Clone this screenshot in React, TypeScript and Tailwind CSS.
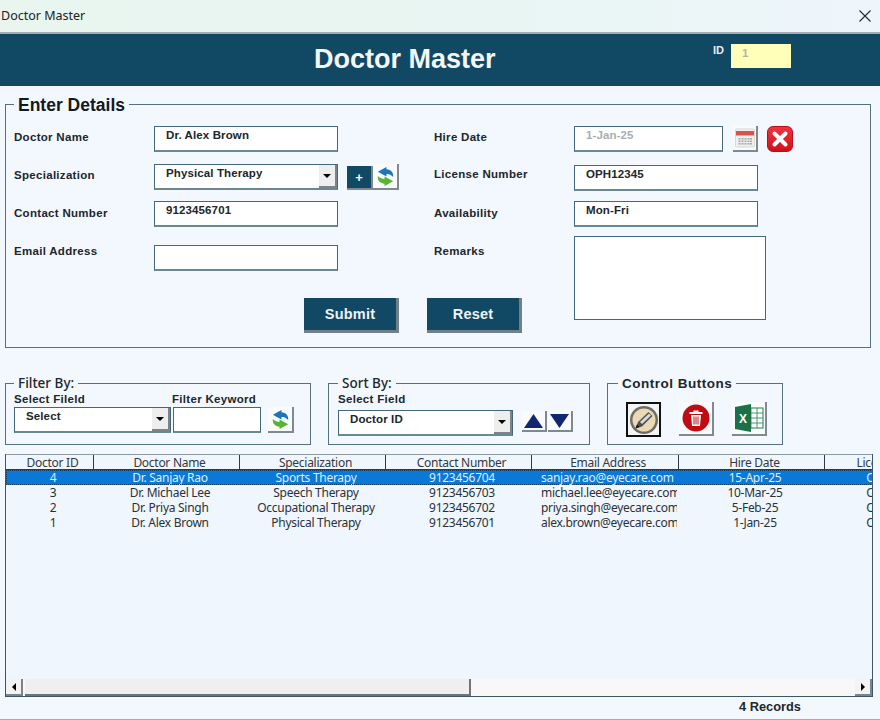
import type { ReactNode } from "react"

const COLUMNS = ["Doctor ID", "Doctor Name", "Specialization", "Contact Number", "Email Address", "Hire Date", "License Number"]

const DOCTORS = [
  ["4", "Dr. Sanjay Rao", "Sports Therapy", "9123456704", "sanjay.rao@eyecare.com", "15-Apr-25", "OPH45678"],
  ["3", "Dr. Michael Lee", "Speech Therapy", "9123456703", "michael.lee@eyecare.com", "10-Mar-25", "OPH34567"],
  ["2", "Dr. Priya Singh", "Occupational Therapy", "9123456702", "priya.singh@eyecare.com", "5-Feb-25", "OPH23456"],
  ["1", "Dr. Alex Brown", "Physical Therapy", "9123456701", "alex.brown@eyecare.com", "1-Jan-25", "OPH12345"],
]

const labelFont = "font-['Liberation_Sans',Arial,sans-serif] font-bold text-[11.5px] tracking-[0.3px] text-[#20262b]"
const valueFont = "font-['Liberation_Sans',Arial,sans-serif] font-bold text-[11.5px] tracking-[0.12px] text-[#20262b]"
const rowGrid = "grid grid-cols-[88px_146px_146px_146px_147px_146px_146px] w-[965px]"

function FieldLabel({ children, className = "" }: { children: ReactNode; className?: string }) {
  return <div className={`${labelFont} w-[140px] shrink-0 ${className}`}>{children}</div>
}

function TextBox({ value, className = "", muted = false }: { value?: string; className?: string; muted?: boolean }) {
  return (
    <div
      className={`${valueFont} h-[26px] border border-[#44687a] border-b-2 border-b-[#6c8794] bg-white pl-[11px] pt-[1px] leading-[14px] ${muted ? "!text-[#a9adb0]" : ""} ${className}`}
    >
      {value}
    </div>
  )
}

function DropArrow({ className = "" }: { className?: string }) {
  return (
    <div className={`flex w-[18px] shrink-0 items-center justify-center self-stretch border-r-2 border-b-2 border-[#7d8487] bg-[#eeeeee] ${className}`}>
      <div className="h-0 w-0 border-x-[4px] border-t-[4px] border-x-transparent border-t-black" />
    </div>
  )
}

function ComboBox({ value, className = "" }: { value: string; className?: string }) {
  return (
    <div className={`${valueFont} flex h-[26px] border border-[#44687a] border-b-2 border-b-[#6c8794] bg-white ${className}`}>
      <div className="flex-1 pl-[11px] pt-[1px] leading-[14px]">{value}</div>
      <DropArrow />
    </div>
  )
}

function IconButton({ children, className = "" }: { children: ReactNode; className?: string }) {
  return (
    <div className={`flex shrink-0 items-center justify-center border-r-2 border-b-2 border-[#7f8a8f] bg-[#f8fafc] ${className}`}>
      {children}
    </div>
  )
}

function ActionButton({ label }: { label: string }) {
  return (
    <div className="flex h-[35px] w-[95px] items-center justify-center border-r-[3px] border-b-[3px] border-[#717f88] bg-[#114863] pt-[1px] font-['Liberation_Sans',Arial,sans-serif] text-[14.5px] font-bold tracking-[0.2px] text-[#eef4f6]">
      {label}
    </div>
  )
}

function SwapIcon({ size = 23 }: { size?: number }) {
  return (
    <svg width={size} height={size} viewBox="0 0 24 24">
      <path d="M13 2 L4 7 L13 12 V9.5 C15.5 9.5 17.5 10 20 12.5 C20.5 7.5 17.5 5 13 4.5 Z" fill="#1c75b8" />
      <path d="M11 22 L20 17 L11 12 V14.5 C8.5 14.5 6.5 14 4 11.5 C3.5 16.5 6.5 19 11 19.5 Z" fill="#55b52f" />
    </svg>
  )
}

function CalendarIcon() {
  return (
    <svg width="20" height="20" viewBox="0 0 20 20">
      <rect x="0.5" y="1" width="19" height="18" rx="1" fill="#f1efee" stroke="#d9d6d4" />
      <rect x="1" y="3" width="18" height="4.5" fill="#d9534c" />
      {[10, 12.5, 15].map((y) =>
        [3.5, 6.5, 9.5, 12.5, 15].map((x) => <rect key={`${x}-${y}`} x={x} y={y} width="2" height="1.6" fill="#a4acb0" />),
      )}
    </svg>
  )
}

function RedCloseIcon() {
  return (
    <div className="ml-[9px] flex h-[26px] w-[26px] items-center justify-center rounded-[6px] border border-[#b3101c] bg-gradient-to-b from-[#f2323c] to-[#cf0f1c]">
      <svg width="18" height="18" viewBox="0 0 18 18">
        <path d="M3.5 3.5 L14.5 14.5 M14.5 3.5 L3.5 14.5" stroke="white" strokeWidth="4" strokeLinecap="round" />
      </svg>
    </div>
  )
}

function PencilIcon() {
  return (
    <svg width="30" height="30" viewBox="0 0 30 30">
      <circle cx="15" cy="15" r="14" fill="#6b6e66" />
      <circle cx="15" cy="15" r="11.5" fill="#ecd9b4" />
      <path d="M6.5 23.5 L9 17 L19.5 7 L23.5 11 L13 21.5 Z" fill="#4b5052" />
      <path d="M11 17 L20 8.5 L22 10.5 L13 19 Z" fill="#d5dadc" />
      <path d="M6.5 23.5 L8 19.5 L10.5 22 Z" fill="#111111" />
    </svg>
  )
}

function TrashIcon() {
  return (
    <svg width="28" height="28" viewBox="0 0 28 28">
      <circle cx="14" cy="14" r="13.5" fill="#c10b12" />
      <path d="M7.5 8 H20.5 V10 H7.5 Z M11.5 8 V6.5 H16.5 V8 Z" fill="white" />
      <path d="M9 11 H19 L18 22 H10 Z" fill="white" />
      <path d="M12 12.5 V20.5 M14 12.5 V20.5 M16 12.5 V20.5" stroke="#c10b12" strokeWidth="1" />
    </svg>
  )
}

function ExcelIcon() {
  return (
    <svg width="30" height="30" viewBox="0 0 30 30">
      <rect x="13" y="5" width="16" height="20" fill="white" stroke="#1f7a4a" />
      <path d="M17 5 V25 M23 5 V25 M13 10 H29 M13 15 H29 M13 20 H29" stroke="#3f9a6b" strokeWidth="1" />
      <path d="M1 4 L17 1 V29 L1 26 Z" fill="#1c7246" />
      <text x="9" y="20" textAnchor="middle" fontSize="12" fontWeight="700" fill="white" fontFamily="Liberation Sans">X</text>
    </svg>
  )
}

function Triangle({ up }: { up?: boolean }) {
  return (
    <IconButton className="h-[21px] w-[25px]">
      <svg width="19" height="14" viewBox="0 0 19 14">
        <path d={up ? "M9.5 0 L19 14 H0 Z" : "M0 0 H19 L9.5 14 Z"} fill="#12286e" />
      </svg>
    </IconButton>
  )
}

function GroupBox({ title, className, titleClass, children }: { title: string; className: string; titleClass: string; children: ReactNode }) {
  return (
    <fieldset className={`h-[70px] shrink-0 border border-[#54717f] ${className}`}>
      <legend className={`px-[4px] pt-[1px] leading-[15px] text-[#20262b] ${titleClass}`}>{title}</legend>
      {children}
    </fieldset>
  )
}

export default function App() {
  return (
    <div className="flex h-[720px] w-[880px] flex-col overflow-hidden bg-[#f3f8fe]">
      {/* title bar */}
      <div className="flex h-[32px] shrink-0 items-center justify-between bg-gradient-to-r from-[#eaf5ef] via-[#e8f5f2] to-[#eef5fb] pl-[1px] pr-[9px] font-['Noto_Sans',sans-serif] text-[12.5px] text-[#222222]">
        <span>Doctor Master</span>
        <svg width="12" height="12" viewBox="0 0 12 12">
          <path d="M0.5 0.5 L11.5 11.5 M11.5 0.5 L0.5 11.5" stroke="#1f2a30" strokeWidth="1.1" />
        </svg>
      </div>
      <div className="h-[2px] shrink-0 bg-[#a6adb1]" />

      {/* header */}
      <div className="flex h-[52px] shrink-0 bg-[#114863] font-['Liberation_Sans',Arial,sans-serif]">
        <h1 className="ml-[314px] w-[399px] pt-[8px] text-[27px] font-bold leading-[34px] text-[#f4f7f8]">Doctor Master</h1>
        <span className="w-[18px] pt-[9px] text-[11px] font-bold leading-[14px] text-[#e6eef2]">ID</span>
        <div className="mt-[10px] h-[24px] w-[60px] bg-[#ffffb9] pl-[11px] pt-[2px] text-[11.5px] font-bold leading-[14px] text-[#b5b5a0]">1</div>
      </div>

      {/* enter details */}
      <fieldset className="mx-[5px] mt-[8px] h-[254px] w-[866px] shrink-0 border border-[#54717f] pl-[8px]">
        <legend className="px-[4px] pt-[2px] font-['Liberation_Sans',Arial,sans-serif] text-[17.5px] font-bold leading-[18px] text-[#15191c]">Enter Details</legend>

        <div className="mt-[12px] flex h-[26px]">
          <div className="flex w-[420px] shrink-0">
            <FieldLabel className="pt-[3px]">Doctor Name</FieldLabel>
            <TextBox value="Dr. Alex Brown" className="w-[184px]" />
          </div>
          <FieldLabel className="pt-[3px]">Hire Date</FieldLabel>
          <TextBox value="1-Jan-25" muted className="w-[149px]" />
          <IconButton className="ml-[10px] h-[26px] w-[25px]">
            <CalendarIcon />
          </IconButton>
          <RedCloseIcon />
        </div>

        <div className="mt-[12px] flex h-[26px]">
          <div className="flex w-[420px] shrink-0">
            <FieldLabel className="pt-[3px]">Specialization</FieldLabel>
            <ComboBox value="Physical Therapy" className="w-[184px]" />
            <div className="ml-[9px] mt-[2px] flex h-[24px] w-[26px] items-center justify-center border-b-2 border-r-2 border-[#7f8a8f] bg-[#114863] pt-[1px] font-['Liberation_Sans',Arial,sans-serif] text-[13px] font-bold text-white">+</div>
            <IconButton className="h-[26px] w-[26px]">
              <SwapIcon />
            </IconButton>
          </div>
          <FieldLabel className="pt-[2px]">License Number</FieldLabel>
          <TextBox value="OPH12345" className="mt-[1px] w-[184px]" />
        </div>

        <div className="mt-[11px] flex h-[26px]">
          <div className="flex w-[420px] shrink-0">
            <FieldLabel className="pt-[4px]">Contact Number</FieldLabel>
            <TextBox value="9123456701" className="w-[184px]" />
          </div>
          <FieldLabel className="pt-[4px]">Availability</FieldLabel>
          <TextBox value="Mon-Fri" className="w-[184px]" />
        </div>

        <div className="mt-[9px] flex">
          <div className="w-[560px] shrink-0 pt-[9px]">
            <div className="flex h-[26px]">
              <FieldLabel className="-mt-[2px]">Email Address</FieldLabel>
              <TextBox className="w-[184px]" />
              <div className="w-[96px] shrink-0" />
              <FieldLabel className="-mt-[2px]">Remarks</FieldLabel>
            </div>
            <div className="ml-[290px] mt-[27px] flex gap-[28px]">
              <ActionButton label="Submit" />
              <ActionButton label="Reset" />
            </div>
          </div>
          <div className="h-[84px] w-[192px] border border-[#44687a] bg-white" />
        </div>
      </fieldset>

      {/* filter, sort, control */}
      <div className="ml-[5px] mt-[27px] flex h-[71px] shrink-0 gap-[17px]">
        <GroupBox title="Filter By:" className="w-[306px] pl-[8px]" titleClass="font-['Noto_Sans',sans-serif] text-[13.5px] font-medium">
          <div className="flex">
            <div className={`${labelFont} h-[16px] w-[158px] pt-[1px] leading-[14px]`}>Select Fileld</div>
            <div className={`${labelFont} h-[16px] pt-[1px] leading-[14px]`}>Filter Keyword</div>
          </div>
          <div className="flex">
            <ComboBox value="Select" className="w-[157px]" />
            <TextBox className="ml-[2px] w-[88px]" />
            <IconButton className="ml-[7px] h-[26px] w-[26px]">
              <SwapIcon />
            </IconButton>
          </div>
        </GroupBox>

        <GroupBox title="Sort By:" className="w-[262px] pl-[9px]" titleClass="font-['Noto_Sans',sans-serif] text-[13.5px] font-medium">
          <div className={`${labelFont} h-[19px] pt-[1px] leading-[14px]`}>Select Field</div>
          <div className="flex">
            <ComboBox value="Doctor ID" className="h-[25px] w-[175px]" />
            <div className="ml-[9px] mt-[1px] flex h-[21px] gap-[1px]">
              <Triangle up />
              <Triangle />
            </div>
          </div>
        </GroupBox>

        <GroupBox title="Control Buttons" className="w-[176px] pl-[18px]" titleClass="-ml-[8px] font-['Liberation_Sans',Arial,sans-serif] text-[13.5px] font-bold tracking-[0.5px]">
          <div className="mt-[11px] flex gap-[18px]">
            <div className="flex h-[35px] w-[35px] items-center justify-center border-2 border-[#111111] bg-[#f4f5f3]">
              <PencilIcon />
            </div>
            <IconButton className="h-[34px] w-[35px]">
              <TrashIcon />
            </IconButton>
            <IconButton className="h-[34px] w-[35px]">
              <ExcelIcon />
            </IconButton>
          </div>
        </GroupBox>
      </div>

      {/* records list */}
      <div className="ml-[5px] mt-[8px] flex h-[243px] w-[868px] shrink-0 flex-col overflow-hidden border border-t-0 border-[#3e5663] bg-[#f0f6fe] font-['Noto_Sans',sans-serif] text-[12px] leading-[15px] tracking-[-0.28px] text-[#2b3135]">
        <div className={`${rowGrid} h-[16px] shrink-0 border-y border-t-[#8c9aa2] border-b-[#2d3a42]`}>
          {COLUMNS.map((col) => (
            <div key={col} className="whitespace-nowrap border-r border-[#2d3a42] pl-[6px] text-center text-[#33393d]">
              {col}
            </div>
          ))}
        </div>
        <div className="flex-1 overflow-hidden">
          {DOCTORS.map((doc, i) => (
            <div
              key={doc[0]}
              className={`${rowGrid} h-[15px] ${i === 0 ? "bg-[#0a78d7] text-[#dcefff] outline-1 -outline-offset-1 outline-dotted outline-[#123a5c]" : ""}`}
            >
              {doc.map((cell, j) => (
                <div
                  key={j}
                  className={`whitespace-nowrap ${j === 4 ? "pl-[9px] text-left [clip-path:inset(0_2px_0_0)]" : j === 6 ? "pr-[6px] text-center" : "pl-[6px] text-center"}`}
                >
                  {cell}
                </div>
              ))}
            </div>
          ))}
        </div>
        {/* horizontal scrollbar */}
        <div className="flex h-[17px] shrink-0 bg-[#f8f8f8]">
          <div className="flex w-[17px] items-center justify-center border-b-2 border-r-2 border-[#7d8487] bg-[#f3f3f3]">
            <div className="h-0 w-0 border-y-[4px] border-r-[4px] border-y-transparent border-r-black" />
          </div>
          <div className="ml-[2px] w-[446px] border-b-2 border-r-2 border-[#6d7579] bg-[#f0eeef]" />
          <div className="flex-1" />
          <div className="flex w-[17px] items-center justify-center border-b-2 border-r-2 border-[#7d8487] bg-[#f3f3f3]">
            <div className="h-0 w-0 border-y-[4px] border-l-[4px] border-y-transparent border-l-black" />
          </div>
        </div>
      </div>

      {/* footer */}
      <div className="flex-1 pl-[739px] pt-[1px] font-['Liberation_Sans',Arial,sans-serif] text-[12.8px] font-bold leading-[18px] text-[#20262b]">4 Records</div>
      <div className="h-[1px] shrink-0 bg-[#a6adb1]" />
    </div>
  )
}
